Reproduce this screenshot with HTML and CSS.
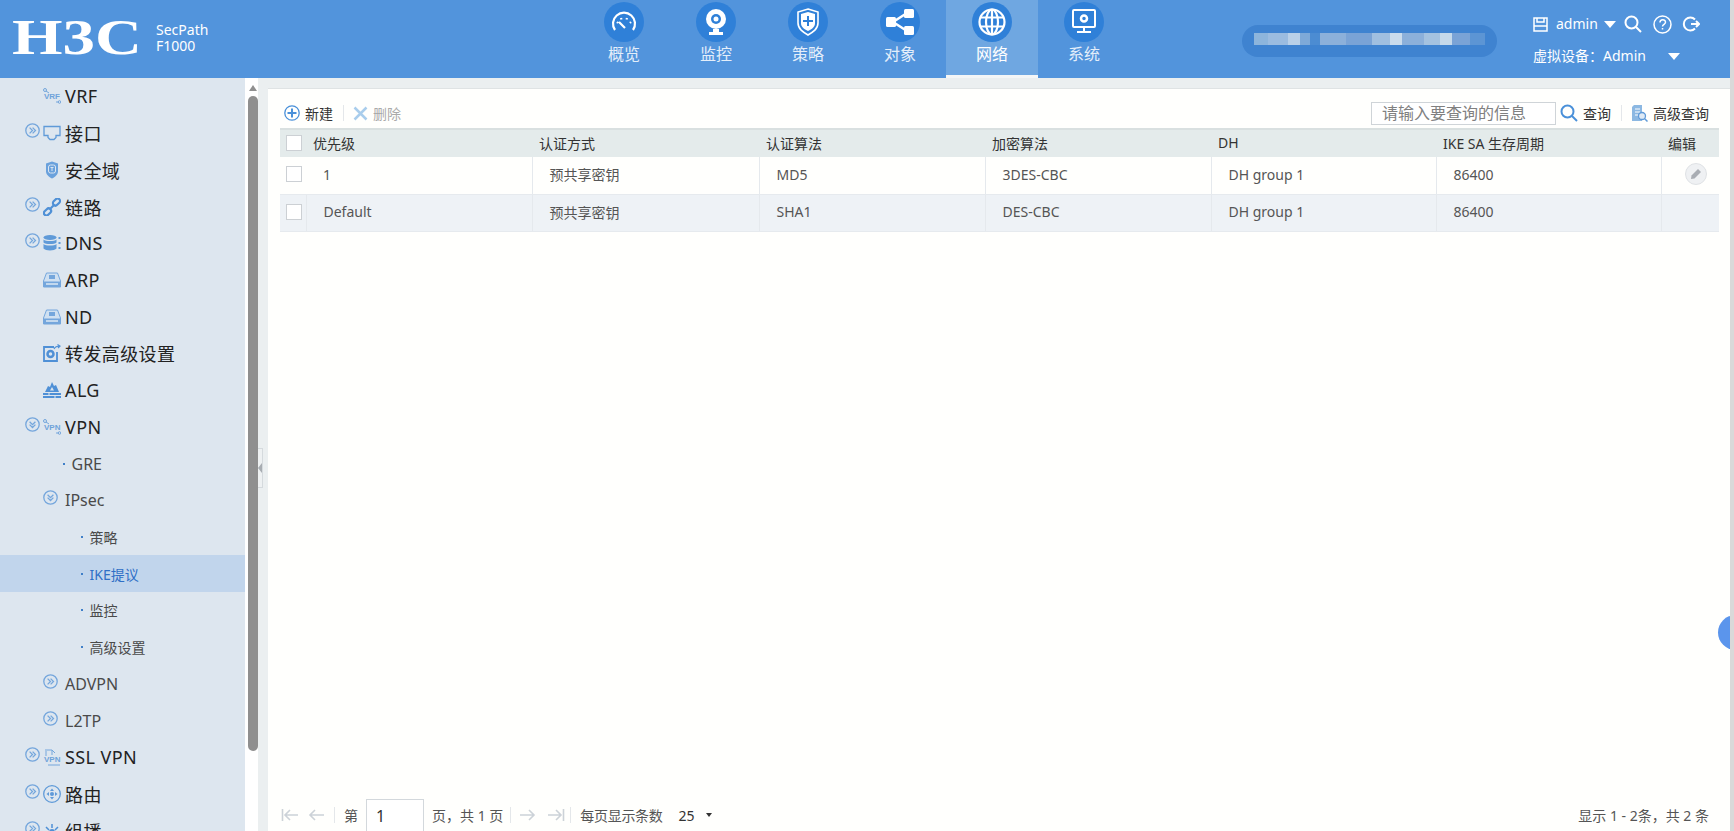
FILE: index.html
```html
<!DOCTYPE html>
<html lang="zh-CN">
<head>
    <meta charset="UTF-8">
    <title>H3C SecPath F1000</title>
    <link rel="stylesheet" href="styles.css">
</head>
<body>
    <svg class="defs">
        <symbol id="open" viewBox="0 0 15 15"><circle cx="7.5" cy="7.5" r="6.7" fill="none" stroke="#74a6dc" stroke-width="1.3"/><path d="M4.6 4.6l2.9 2.9-2.9 2.9M7.6 4.6l2.9 2.9-2.9 2.9" fill="none" stroke="#74a6dc" stroke-width="1.3"/></symbol>
        <symbol id="down" viewBox="0 0 15 15"><circle cx="7.5" cy="7.5" r="6.7" fill="none" stroke="#74a6dc" stroke-width="1.3"/><path d="M4.6 4.8l2.9 2.9 2.9-2.9M4.6 7.6l2.9 2.9 2.9-2.9" fill="none" stroke="#74a6dc" stroke-width="1.3"/></symbol>
        <symbol id="device" viewBox="0 0 18 16"><path d="M3.5 1h11l3 8v6H.5V9z" fill="#cfe0f1" stroke="#74a6dc"/><path d="M.5 9.5h17v5.500H.5z" fill="#74a6dc"/><path d="M3 12h12" stroke="#dce8f4" stroke-width="1.500"/><path d="M6 3h6v4H6z" fill="#74a6dc"/></symbol>
    </svg>

    <header class="top">
        <div class="brand">
            <svg class="logo" width="130" height="58" viewBox="0 0 130 58"><text class="logo-text" x="0" y="46" textLength="130" lengthAdjust="spacingAndGlyphs">H3C</text></svg>
            <div class="model">SecPath<br>F1000</div>
        </div>
        <nav class="menu">
            <a class="menu-item">
                <span class="menu-ico"><svg width="26" height="22" viewBox="0 0 26 22" fill="none" stroke="#fff" stroke-width="2.200"><path d="M4 19A11 11 0 1 1 22 19"/><path d="M6 11l1 1M10 7l.5 1.500M16 7l-.5 1.500M20 11l-1 1M8 11l6 6"/></svg></span>
                概览
            </a>
            <a class="menu-item">
                <span class="menu-ico"><svg width="22" height="28" viewBox="0 0 22 28"><circle cx="11" cy="11" r="10" fill="#fff"/><circle cx="11" cy="11" r="5" fill="#2f80d8"/><circle cx="11" cy="11" r="2.500" fill="#fff"/><path d="M8 21h6v3h4v3H4v-3h4z" fill="#fff"/></svg></span>
                监控
            </a>
            <a class="menu-item">
                <span class="menu-ico"><svg width="24" height="28" viewBox="0 0 24 28"><path d="M12 1l10 3v11c0 6-5 9-10 12C7 24 2 21 2 15V4z" fill="#2f80d8" stroke="#fff" stroke-width="1.600"/><path d="M12 4l7 2v9c0 4-3 6-7 8-4-2-7-4-7-8V6z" fill="#fff"/><path d="M12 8v10M7 13h10" stroke="#2f80d8" stroke-width="2"/></svg></span>
                策略
            </a>
            <a class="menu-item">
                <span class="menu-ico"><svg width="30" height="28" viewBox="0 0 30 28" fill="#fff"><path d="M8 14L22 5M8 14l14 9" stroke="#fff" stroke-width="2.500"/><rect x="1" y="9" width="10" height="10" rx="1.500"/><rect x="19" y="1" width="10" height="9" rx="1.500"/><rect x="19" y="18" width="10" height="9" rx="1.500"/></svg></span>
                对象
            </a>
            <a class="menu-item active">
                <span class="menu-ico"><svg width="28" height="28" viewBox="0 0 28 28" fill="none" stroke="#fff" stroke-width="2.200"><circle cx="14" cy="14" r="12.500"/><ellipse cx="14" cy="14" rx="6" ry="12.500"/><path d="M14 1.500v25M2 9.500h24M2 18.500h24"/></svg></span>
                网络
            </a>
            <a class="menu-item">
                <span class="menu-ico"><svg width="24" height="26" viewBox="0 0 24 26"><rect x="1" y="1" width="22" height="17" rx="1" fill="none" stroke="#fff" stroke-width="2"/><circle cx="12" cy="9.500" r="3" fill="none" stroke="#fff" stroke-width="2.500"/><path d="M11 18h2v4h-2zM5 22h14v2H5z" fill="#fff"/></svg></span>
                系统
            </a>
        </nav>
        <div class="blur-pill"><span class="blur-blocks"></span></div>
        <div class="user">
            <div class="user-row">
                <svg class="save" width="15" height="15" viewBox="0 0 15 15" fill="none" stroke="#fff" stroke-width="1.500"><path d="M1 1h13v13H1zM4 1v4h7V1M1 9h13"/></svg>
                <span class="user-name">admin</span>
                <span class="caret-big"></span>
                <svg class="tool-search" width="18" height="18" viewBox="0 0 18 18" fill="none" stroke="#fff" stroke-width="2"><circle cx="7.500" cy="7.500" r="6"/><path d="M12 12l5 5"/></svg>
                <svg class="tool-help" width="19" height="19" viewBox="0 0 19 19" fill="none" stroke="#fff" stroke-width="1.500"><circle cx="9.500" cy="9.500" r="8.500"/><path d="M7 7.500c0-3.500 5.500-3.500 5.500-.2 0 2-3 2-3 4.200M9.500 13v1.500"/></svg>
                <svg class="tool-refresh" width="18" height="16" viewBox="0 0 18 16" fill="none" stroke="#fff" stroke-width="2"><path d="M13 3.500A6.500 6.500 0 1 0 13 12.500M9 8h8"/><path d="M14 5l3 3-3 3"/></svg>
            </div>
            <div class="user-row second">
                <span>虚拟设备：Admin</span>
                <span class="caret-big far"></span>
            </div>
        </div>
    </header>

    <div class="main">
        <aside class="side">
            <div class="row lv1 plain"><svg class="ico" viewBox="0 0 18 16"><path d="M3 3l3 2M13 14h3" stroke="#74a6dc" fill="none"/><circle cx="2" cy="2" r="1.500" fill="none" stroke="#74a6dc"/><circle cx="16.500" cy="14" r="1.300" fill="none" stroke="#74a6dc"/><text class="tiny" x="1" y="11">VRF</text></svg><span>VRF</span></div>
            <div class="row lv1"><svg class="toggle"><use href="#open"/></svg><svg class="ico" viewBox="0 0 18 16"><path d="M1 1.500h16v9h-4v2l-2 2H7l-2-2v-2H1z" fill="none" stroke="#5f9ad8" stroke-width="1.300"/></svg><span>接口</span></div>
            <div class="row lv1 plain"><svg class="ico" viewBox="0 0 18 18"><path d="M9 .5l6 2v8c0 3-3 5.500-6 7-3-1.500-6-4-6-7v-8z" fill="#6aa1dc"/><rect x="5.500" y="4" width="7" height="8" rx="2" fill="none" stroke="#dbe6f1"/><path d="M7.500 6.500h3M9 6.500V10" stroke="#dbe6f1"/></svg><span>安全域</span></div>
            <div class="row lv1"><svg class="toggle"><use href="#open"/></svg><svg class="ico" viewBox="0 0 18 18" fill="none" stroke="#4f90d6" stroke-width="2.200"><rect x="9.500" y="1.500" width="8" height="5" rx="2.500" transform="rotate(-45 13.500 4)"/><rect x=".5" y="11.500" width="8" height="5" rx="2.500" transform="rotate(-45 4.500 14)"/><path d="M7 11l4-4"/></svg><span>链路</span></div>
            <div class="row lv1"><svg class="toggle"><use href="#open"/></svg><svg class="ico" viewBox="0 0 18 16" fill="#5f9ad8"><ellipse cx="7" cy="2.500" rx="6.500" ry="2.500"/><path d="M.5 4.500c2 2 11 2 13 0v3c-2 2-11 2-13 0zM.5 9c2 2 11 2 13 0v4.500c-2 2.500-11 2.500-13 0z"/><path d="M15.500 2h2v2h-2zM15.500 7h2v2h-2zM15.500 12h2v2h-2z"/></svg><span>DNS</span></div>
            <div class="row lv1 plain"><svg class="ico"><use href="#device"/></svg><span>ARP</span></div>
            <div class="row lv1 plain"><svg class="ico"><use href="#device"/></svg><span>ND</span></div>
            <div class="row lv1 plain"><svg class="ico" viewBox="0 0 18 18" fill="none" stroke="#4f90d6" stroke-width="1.800"><path d="M11 3H1v14h13V8"/><circle cx="7.500" cy="10" r="3" stroke-width="2.500"/><path d="M11 5c1-2 3-3 6-3M14.500 .5L17 2l-2 2" stroke-width="1.200"/></svg><span>转发高级设置</span></div>
            <div class="row lv1 plain"><svg class="ico" viewBox="0 0 18 16" fill="#4f90d6"><path d="M9 0l2 4 2-1 3 7H2l3-6 2 1z"/><path d="M0 11h18v5H0z"/><path d="M0 13.500h18M6 11v2.500M12 13.500V16" stroke="#dde6ef"/><path d="M9 5l2 3.500H7z" fill="#dde6ef"/></svg><span>ALG</span></div>
            <div class="row lv1"><svg class="toggle"><use href="#down"/></svg><svg class="ico" viewBox="0 0 18 16"><path d="M3 3l3 2M13 14h3" stroke="#74a6dc" fill="none"/><circle cx="2" cy="2" r="1.500" fill="none" stroke="#74a6dc"/><circle cx="16.500" cy="14" r="1.300" fill="none" stroke="#74a6dc"/><text class="tiny" x="1" y="11">VPN</text></svg><span>VPN</span></div>
            <div class="row lv2 leaf"><i class="dot"></i><span>GRE</span></div>
            <div class="row lv2"><svg class="toggle"><use href="#down"/></svg><span>IPsec</span></div>
            <div class="row lv3"><i class="dot"></i><span>策略</span></div>
            <div class="row lv3 current"><i class="dot"></i><span>IKE提议</span></div>
            <div class="row lv3"><i class="dot"></i><span>监控</span></div>
            <div class="row lv3"><i class="dot"></i><span>高级设置</span></div>
            <div class="row lv2"><svg class="toggle"><use href="#open"/></svg><span>ADVPN</span></div>
            <div class="row lv2"><svg class="toggle"><use href="#open"/></svg><span>L2TP</span></div>
            <div class="row lv1"><svg class="toggle"><use href="#open"/></svg><svg class="ico" viewBox="0 0 18 18"><path d="M2 2h7l3 3M3 3v5M9 2v5M17 17H5" stroke="#74a6dc" fill="none"/><text class="tiny" x="1" y="14">VPN</text></svg><span>SSL VPN</span></div>
            <div class="row lv1"><svg class="toggle"><use href="#open"/></svg><svg class="ico" viewBox="0 0 18 18" fill="none" stroke="#5f9ad8"><circle cx="9" cy="9" r="8.300" stroke-width="1.300"/><path d="M9 3.500L11 6H7zM9 14.500L7 12h4zM3.500 9L6 7v4zM14.500 9L12 11V7z" fill="#5f9ad8" stroke="none"/><circle cx="9" cy="9" r="2" fill="#5f9ad8" stroke="none"/></svg><span>路由</span></div>
            <div class="row lv1"><svg class="toggle"><use href="#open"/></svg><svg class="ico" viewBox="0 0 18 18" fill="#4f90d6"><circle cx="9" cy="10" r="3"/><circle cx="2.500" cy="15" r="2"/><circle cx="15.500" cy="15" r="2"/><path d="M9 2v4M3 5l3 3M15 5l-3 3" stroke="#4f90d6" stroke-width="1.500"/></svg><span>组播</span></div>
        </aside>

        <div class="scroll">
            <span class="scroll-up"></span>
            <span class="scroll-thumb"></span>
        </div>
        <div class="handle-strip"><span class="handle"></span></div>

        <section class="panel">
            <div class="toolbar">
                <svg class="tb-ico" width="16" height="16" viewBox="0 0 16 16" fill="none" stroke="#4a90d9"><circle cx="8" cy="8" r="7.200" stroke-width="1.300"/><path d="M8 3.500v9M3.500 8h9" stroke-width="2"/></svg>
                <span class="tb-label">新建</span>
                <i class="tb-sep"></i>
                <svg class="tb-ico" width="15" height="15" viewBox="0 0 15 15" fill="none" stroke="#a9cdec" stroke-width="2.500"><path d="M1.500 1.500l12 12M13.500 1.500l-12 12"/></svg>
                <span class="tb-label off">删除</span>
                <input class="search" type="text" placeholder="请输入要查询的信息">
                <svg class="tb-ico" width="18" height="18" viewBox="0 0 18 18" fill="none" stroke="#4a90d9" stroke-width="2"><circle cx="7.500" cy="7.500" r="6"/><path d="M12 12l5 5"/></svg>
                <span class="tb-label">查询</span>
                <i class="tb-sep"></i>
                <svg class="tb-ico" width="17" height="18" viewBox="0 0 17 18"><path d="M3 1h8v16H1V3z" fill="#8cb8e2"/><path d="M4 5h5M4 8h5M4 11h3" stroke="#fff"/><circle cx="11" cy="12" r="3.500" fill="#dfeaf5" stroke="#5f9ad8" stroke-width="1.300"/><path d="M13.500 14.500l3 3" stroke="#5f9ad8" stroke-width="1.500"/></svg>
                <span class="tb-label">高级查询</span>
            </div>

            <table class="grid">
                <thead>
                    <tr>
                        <th class="c-check"><span class="check"></span></th>
                        <th class="c-wide">优先级</th>
                        <th class="c-mid">认证方式</th>
                        <th class="c-wide">认证算法</th>
                        <th class="c-wide">加密算法</th>
                        <th class="c-narrow">DH</th>
                        <th class="c-narrow">IKE SA 生存周期</th>
                        <th>编辑</th>
                    </tr>
                </thead>
                <tbody>
                    <tr>
                        <td class="no-line"><span class="check"></span></td>
                        <td class="no-line">1</td>
                        <td>预共享密钥</td>
                        <td>MD5</td>
                        <td>3DES-CBC</td>
                        <td>DH group 1</td>
                        <td>86400</td>
                        <td class="edit-cell"><span class="edit"><svg width="12" height="12" viewBox="0 0 12 12" fill="#a9adb3"><path d="M8 1l3 3-6.500 6.500-3.500.5.500-3.500z"/></svg></span></td>
                    </tr>
                    <tr class="alt">
                        <td class="no-line"><span class="check"></span></td>
                        <td>Default</td>
                        <td>预共享密钥</td>
                        <td>SHA1</td>
                        <td>DES-CBC</td>
                        <td>DH group 1</td>
                        <td>86400</td>
                        <td></td>
                    </tr>
                </tbody>
            </table>

            <div class="pager">
                <svg class="pg-ico first" width="18" height="14" viewBox="0 0 18 14" fill="none" stroke="#ccd2d8" stroke-width="1.600"><path d="M1.500 1v12M17 7H4M9 2L4 7l5 5"/></svg>
                <svg class="pg-ico" width="16" height="14" viewBox="0 0 16 14" fill="none" stroke="#ccd2d8" stroke-width="1.600"><path d="M16 7H2M7 2L2 7l5 5"/></svg>
                <i class="tb-sep"></i>
                <span class="pg-text">第</span>
                <input class="pg-input" type="text" value="1">
                <span class="pg-text">页，共 1 页</span>
                <i class="tb-sep pg-sep-a"></i>
                <svg class="pg-ico" width="16" height="14" viewBox="0 0 16 14" fill="none" stroke="#ccd2d8" stroke-width="1.600"><path d="M0 7h14M9 2l5 5-5 5"/></svg>
                <svg class="pg-ico last" width="18" height="14" viewBox="0 0 18 14" fill="none" stroke="#ccd2d8" stroke-width="1.600"><path d="M16.500 1v12M1 7h13M9 2l5 5-5 5"/></svg>
                <i class="tb-sep pg-sep-b"></i>
                <span class="pg-text pg-per">每页显示条数</span>
                <span class="pg-size">25</span>
                <span class="caret-small"></span>
                <span class="pg-total">显示 1 - 2条，共 2 条</span>
            </div>
            <span class="bubble"></span>
        </section>
    </div>
</body>
</html>
```

FILE: styles.css
```css
* {
    box-sizing: border-box;
}
html, body {
    margin: 0;
    height: 831px;
    overflow: hidden;
}
body {
    display: flex;
    flex-direction: column;
    border-right: 4px solid #d9d9d9;
    background: #fff;
    font-family: "Noto Sans", "Noto Sans CJK SC", sans-serif;
    font-size: 14px;
    color: #444;
}
.defs {
    display: none;
}

/* top bar */
.top {
    flex: none;
    height: 78px;
    display: flex;
    background: #5294dc;
    color: #fff;
}
.brand {
    width: 578px;
    padding: 8px 0 0 12px;
    display: flex;
    align-items: flex-start;
}
.logo-text {
    font-family: "Liberation Serif", serif;
    font-weight: bold;
    font-size: 50px;
    fill: #fff;
}
.model {
    margin: 14px 0 0 14px;
    font-size: 14px;
    line-height: 16px;
}
.menu {
    display: flex;
}
.menu-item {
    width: 92px;
    height: 78px;
    padding-top: 2px;
    display: flex;
    flex-direction: column;
    align-items: center;
    font-size: 16px;
    line-height: 24px;
    color: #e4eefa;
}
.menu-item.active {
    background: #6fa7e1;
    border-bottom: 3px solid #f4f6f7;
    color: #fff;
}
.menu-ico {
    width: 40px;
    height: 40px;
    border-radius: 50%;
    background: #2f80d8;
    display: flex;
    align-items: center;
    justify-content: center;
}
.blur-pill {
    width: 255px;
    height: 32px;
    margin: 25px 0 0 112px;
    padding: 8px 12px;
    border-radius: 16px;
    background: #3f83d0;
}
.blur-blocks {
    display: block;
    height: 12px;
    background: linear-gradient(90deg,
        #8db5dc 0 14px, #9bbce0 14px 34px, #b9d0e8 34px 46px, #7ea9d8 46px 56px,
        #4c8cd2 56px 66px, #8cb0da 66px 92px, #7aa3d6 92px 118px, #a0bfe0 118px 136px,
        #cbdcec 136px 148px, #8cb0da 148px 170px, #a4c2e0 170px 186px, #c5d9ea 186px 198px,
        #7aa3d6 198px 216px, #5c95d4 216px 231px);
}
.user {
    margin-left: 36px;
    padding-top: 14px;
}
.user-row {
    height: 20px;
    display: flex;
    align-items: center;
    line-height: 20px;
}
.user-row.second {
    margin-top: 12px;
}
.user-name {
    margin-left: 8px;
}
.caret-big {
    width: 0;
    height: 0;
    margin-left: 6px;
    border: 6px solid transparent;
    border-top: 7px solid #fff;
    border-bottom: 0;
}
.caret-big.far {
    margin-left: 22px;
}
.tool-search {
    margin-left: 8px;
}
.tool-help {
    margin-left: 11px;
}
.tool-refresh {
    margin-left: 10px;
}

/* side tree */
.main {
    flex: 1;
    min-height: 0;
    display: flex;
}
.side {
    flex: none;
    width: 245px;
    overflow: hidden;
    background: #dde6ef;
}
.row {
    height: 36.72px;
    display: flex;
    align-items: center;
    white-space: nowrap;
}
.toggle {
    flex: none;
    width: 15px;
    height: 15px;
    margin: -5px 3px 0 0;
}
.ico {
    flex: none;
    width: 18px;
    height: 18px;
    margin-right: 4px;
}
.tiny {
    font-family: "Liberation Sans", sans-serif;
    font-size: 8px;
    letter-spacing: 0;
    font-weight: bold;
    fill: #6fa3da;
}
.lv1 {
    padding-left: 25px;
    font-size: 18px;
    letter-spacing: .4px;
    color: #222;
}
.lv1.plain {
    padding-left: 43px;
}
.lv2 {
    padding-left: 43px;
    font-size: 16px;
    color: #4a4a4a;
}
.lv2 .toggle {
    margin-right: 7px;
}
.lv2.leaf {
    padding-left: 63px;
}
.lv3 {
    padding-left: 81px;
    font-size: 14px;
    color: #4a4a4a;
}
.dot {
    width: 2px;
    height: 2px;
    margin-right: 6.5px;
    background: #3f7fc8;
}
.current {
    background: #c1d5ec;
    color: #2f6fc6;
}
.scroll {
    flex: none;
    width: 13px;
    padding: 7px 0 0 3px;
    display: flex;
    flex-direction: column;
    align-items: center;
    background: #fff;
}
.scroll-up {
    width: 0;
    height: 0;
    border: 4px solid transparent;
    border-bottom: 6px solid #8f8f8f;
    border-top: 0;
}
.scroll-thumb {
    width: 10px;
    height: 655px;
    margin-top: 5px;
    border-radius: 5px;
    background: #8f8f8f;
}
.handle-strip {
    flex: none;
    width: 10px;
    padding-top: 370px;
    background: #ebeff0;
}
.handle {
    display: block;
    position: relative;
    width: 5px;
    height: 40px;
    border: 1px solid #d5dadd;
    border-left: 0;
    background: #eef1f2;
}
.handle::after {
    content: "";
    position: absolute;
    top: 14px;
    left: 0;
    border: 5px solid transparent;
    border-right: 4px solid #a8adb2;
    border-left: 0;
}

/* content */
.panel {
    flex: 1;
    min-width: 0;
    position: relative;
    overflow: hidden;
    padding: 10px 10px 0 12px;
    display: flex;
    flex-direction: column;
    background: linear-gradient(#ebeff0 10px, #dfe3e4 10px, #dfe3e4 11px, #fffffd 11px);
}
.toolbar {
    flex: none;
    height: 40px;
    padding: 10px 11px 0 4px;
    display: flex;
    align-items: center;
}
.tb-ico {
    flex: none;
}
.tb-label {
    margin-left: 5px;
    font-size: 14px;
    color: #333;
    white-space: nowrap;
}
.tb-label.off {
    color: #aaa;
}
.tb-sep {
    flex: none;
    width: 1px;
    height: 16px;
    margin: 0 9px 0 10px;
    background: #e4e7ea;
}
.search {
    width: 185px;
    height: 23px;
    margin: 0 4px 0 auto;
    padding: 0 10px;
    border: 1px solid #cfd4d8;
    background: #fff;
    font: 16px/21px "Noto Sans", "Noto Sans CJK SC", sans-serif;
}
.search::placeholder {
    color: #808080;
    opacity: 1;
}
.grid {
    flex: none;
    width: 1439px;
    table-layout: fixed;
    border-collapse: collapse;
}
.grid th {
    height: 28px;
    padding: 0 0 2px 7px;
    border-top: 2px solid #d9e0e0;
    background: #e4ebeb;
    font-weight: normal;
    text-align: left;
    color: #333;
}
.grid th.c-check {
    width: 26px;
    padding-left: 6px;
}
.grid th.c-narrow {
    width: 225px;
}
.grid th.c-mid {
    width: 227px;
}
.grid th.c-wide {
    width: 226px;
}
.grid td {
    height: 37px;
    padding: 0 0 2px 17px;
    border-left: 1px solid #e5e9ed;
    border-bottom: 1px solid #e6eaee;
    color: #555;
}
.grid td.no-line {
    border-left: 0;
}
.grid td:first-child {
    padding-left: 6px;
}
.grid .alt td {
    background: #eef2f6;
}
.check {
    display: block;
    width: 16px;
    height: 16px;
    border: 1px solid #ccd0d4;
    background: #fff;
}
.edit-cell {
    padding-left: 23px !important;
}
.edit {
    width: 22px;
    height: 22px;
    border: 1px solid #dfe2e5;
    border-radius: 50%;
    background: #eff1f3;
    display: flex;
    align-items: center;
    justify-content: center;
}
.pager {
    flex: none;
    height: 32px;
    margin-top: auto;
    padding: 0 11px 0 1px;
    display: flex;
    align-items: center;
}
.pg-text {
    color: #555;
    white-space: nowrap;
}
.pg-ico.first {
    margin-right: 9px;
}
.pg-ico.last {
    margin-left: 11px;
}
.tb-sep.pg-sep-a {
    margin-left: 7px;
}
.tb-sep.pg-sep-b {
    margin-left: 5px;
}
.pg-per {
    letter-spacing: -.3px;
}
.pg-input {
    align-self: flex-start;
    width: 58px;
    height: 34px;
    margin: 0 8px;
    padding: 0 0 0 9px;
    border: 1px solid #d3d8dc;
    background: #fff;
    font: 16px/32px "Noto Sans", sans-serif;
    color: #333;
}
.pg-size {
    margin-left: 16px;
    color: #333;
}
.caret-small {
    width: 0;
    height: 0;
    margin-left: 11px;
    border: 3px solid transparent;
    border-top: 4px solid #333;
    border-bottom: 0;
}
.pg-total {
    margin-left: auto;
    color: #555;
}
.bubble {
    position: absolute;
    top: 537px;
    right: -23px;
    width: 35px;
    height: 35px;
    border-radius: 50%;
    background: #5b95ec;
}
```
